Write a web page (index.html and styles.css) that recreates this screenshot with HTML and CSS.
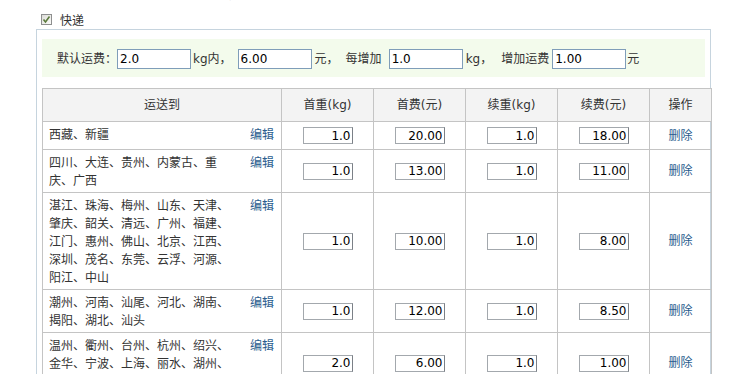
FILE: index.html
```html
<!DOCTYPE html>
<html lang="zh-CN">
<head>
  <meta charset="UTF-8">
  <title>运费模板 - 快递</title>
  <link rel="stylesheet" href="styles.css">
</head>
<body>
  <div class="top-note"><span>说明：未指定地区的运费按照默认运费计算，指定地区按照下表中设置的运费计算。</span></div>

  <label class="express">
    <span class="check">
      <svg width="11" height="11" viewBox="0 0 11 11"><path d="M2.5 5.5 L4.5 8 L8.5 2.5" fill="none" stroke="#5b7a3c" stroke-width="1.6"/></svg>
    </span>
    快递
  </label>

  <div class="fee-box">
    <div class="default-fee"><span>默认运费：</span><input class="fee-input" type="text" value="2.0"><span class="t2">kg内，</span><input class="fee-input i2" type="text" value="6.00"><span class="t3">元，</span><span class="t4">每增加</span><input class="fee-input i3" type="text" value="1.0"><span class="t5">kg，</span><span class="t6">增加运费</span><input class="fee-input i4" type="text" value="1.00"><span class="t7">元</span></div>

    <table class="area-table">
      <tr>
        <th class="c-area">运送到</th>
        <th>首重(kg)</th>
        <th>首费(元)</th>
        <th>续重(kg)</th>
        <th>续费(元)</th>
        <th class="c-op">操作</th>
      </tr>
      <tr>
        <td class="area"><div class="area-inner"><span class="names">西藏、新疆</span><a class="link" href="#">编辑</a></div></td>
        <td><input class="num" type="text" value="1.0"></td>
        <td><input class="num" type="text" value="20.00"></td>
        <td><input class="num" type="text" value="1.0"></td>
        <td><input class="num" type="text" value="18.00"></td>
        <td><a class="link" href="#">删除</a></td>
      </tr>
      <tr>
        <td class="area"><div class="area-inner"><span class="names">四川、大连、贵州、内蒙古、重庆、广西</span><a class="link" href="#">编辑</a></div></td>
        <td><input class="num" type="text" value="1.0"></td>
        <td><input class="num" type="text" value="13.00"></td>
        <td><input class="num" type="text" value="1.0"></td>
        <td><input class="num" type="text" value="11.00"></td>
        <td><a class="link" href="#">删除</a></td>
      </tr>
      <tr>
        <td class="area"><div class="area-inner"><span class="names">湛江、珠海、梅州、山东、天津、肇庆、韶关、清远、广州、福建、江门、惠州、佛山、北京、江西、深圳、茂名、东莞、云浮、河源、阳江、中山</span><a class="link" href="#">编辑</a></div></td>
        <td><input class="num" type="text" value="1.0"></td>
        <td><input class="num" type="text" value="10.00"></td>
        <td><input class="num" type="text" value="1.0"></td>
        <td><input class="num" type="text" value="8.00"></td>
        <td><a class="link" href="#">删除</a></td>
      </tr>
      <tr>
        <td class="area"><div class="area-inner"><span class="names">潮州、河南、汕尾、河北、湖南、揭阳、湖北、汕头</span><a class="link" href="#">编辑</a></div></td>
        <td><input class="num" type="text" value="1.0"></td>
        <td><input class="num" type="text" value="12.00"></td>
        <td><input class="num" type="text" value="1.0"></td>
        <td><input class="num" type="text" value="8.50"></td>
        <td><a class="link" href="#">删除</a></td>
      </tr>
      <tr>
        <td class="area"><div class="area-inner"><span class="names">温州、衢州、台州、杭州、绍兴、金华、宁波、上海、丽水、湖州、嘉兴、舟山</span><a class="link" href="#">编辑</a></div></td>
        <td><input class="num" type="text" value="2.0"></td>
        <td><input class="num" type="text" value="6.00"></td>
        <td><input class="num" type="text" value="1.0"></td>
        <td><input class="num" type="text" value="1.00"></td>
        <td><a class="link" href="#">删除</a></td>
      </tr>
    </table>
  </div>
</body>
</html>
```

FILE: styles.css
```css
body {
  margin: 0;
  font-family: "DejaVu Sans", "Noto Sans CJK SC", sans-serif;
  font-size: 12px;
  color: #333;
  background: #fff;
}

.top-note {
  height: 3px;
  overflow: hidden;
  color: #b5b5b5;
  white-space: nowrap;
}

.top-note span {
  display: block;
  line-height: 14px;
  margin-top: -12px;
}

.express {
  display: flex;
  align-items: center;
  gap: 8px;
  height: 19px;
  margin: 7px 0 0 41px;
}

.check {
  display: inline-block;
  width: 11px;
  height: 11px;
  border: 1px solid #8e8f8f;
  background: linear-gradient(135deg, #dcdcd8, #fbfbf9);
  box-sizing: border-box;
  line-height: 0;
}

.check svg {
  margin: -1px 0 0 -1px;
}

.fee-box {
  width: 675px;
  margin-left: 36px;
  padding: 9px 5px;
  border: 1px solid #c6d4de;
  box-sizing: border-box;
}

.default-fee {
  height: 38px;
  line-height: 38px;
  padding-left: 15px;
  background: #f3fbec;
  white-space: nowrap;
}

.default-fee span,
.default-fee input {
  vertical-align: middle;
}

.fee-input {
  width: 74px;
  height: 20px;
  padding: 0 2px;
  margin: 0;
  border: 1px solid #7f9db9;
  box-sizing: border-box;
  font: 12px "DejaVu Sans", sans-serif;
  color: #000;
}

.t2 { margin-left: 2px; }
.i2 { margin-left: 6px; }
.t3 { margin-left: 3px; }
.t4 { margin-left: 7px; }
.i3 { margin-left: 7px; }
.t5 { margin-left: 3px; }
.t6 { margin-left: 9px; }
.i4 { margin-left: 3px; }
.t7 { margin-left: 1px; }

.area-table {
  width: 663px;
  margin-top: 11px;
  border-collapse: collapse;
  table-layout: fixed;
}

.area-table th,
.area-table td {
  border: 1px solid #c4c4c4;
  text-align: center;
  line-height: 18px;
}

.area-table th {
  width: 91px;
  padding: 7px 0;
  background: #f3f3f3;
  font-weight: normal;
}

.area-table th.c-area {
  width: 238px;
}

.area-table th.c-op {
  width: 61px;
}

.area-table td {
  padding: 3px 0;
}

.area-table td.area {
  padding: 4px 7px 2px 6px;
  vertical-align: top;
  text-align: left;
}

.area-inner {
  display: flex;
  justify-content: space-between;
}

.names {
  width: 186px;
}

.link {
  color: #2b5d8e;
  text-decoration: none;
}

.num {
  width: 50px;
  height: 17px;
  margin: 2px 0;
  padding: 0 1px 0 0;
  border: 1px solid #a3a8ad;
  border-right-color: #7b8087;
  box-sizing: border-box;
  vertical-align: middle;
  text-align: right;
  font: 12px "DejaVu Sans", sans-serif;
  color: #000;
}
```
